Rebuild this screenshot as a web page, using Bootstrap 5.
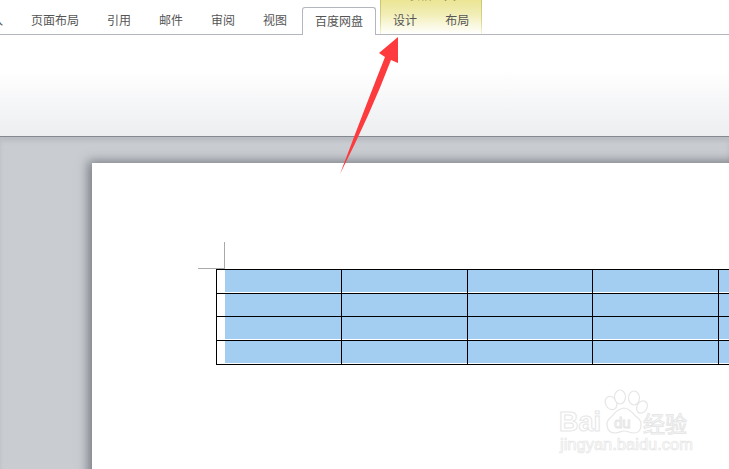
<!DOCTYPE html>
<html lang="zh-CN">
<head>
  <meta charset="UTF-8" />
  <meta name="viewport" content="width=device-width, initial-scale=1" />
  <title>Word 表格</title>
  <link href="https://cdn.jsdelivr.net/npm/bootstrap@5.3.3/dist/css/bootstrap.min.css" rel="stylesheet" />
  <style>
    html, body { height: 100%; overflow: hidden; }
    body {
      background: #fff;
      font-family: "Noto Sans CJK SC", "Liberation Sans", sans-serif;
      position: relative;
    }
    .tab-strip {
      height: 35px;
      border-bottom: 1px solid #b4b6bd;
      margin-left: -35px;
      background: #fff;
    }
    .rtab {
      padding: 6px 14px 0;
      font-size: 12px;
      line-height: 28px;
      height: 34px;
      color: #555;
      white-space: nowrap;
    }
    .rtab-on {
      background: #fff;
      height: 28px;
      margin-top: 7px;
      padding: 0 12px;
      margin-left: 1px;
      margin-right: 4px;
      line-height: 26px;
      border: 1px solid #b4b6bd;
      border-bottom: 0;
      border-radius: 3px 3px 0 0;
      position: relative;
      z-index: 1;
    }
    .ctx-group {
      position: relative;
      background: linear-gradient(#ebe594 0, #f1edb4 40%, #fbfae6 80%, #fff 100%);
      border-left: 1px solid;
      border-right: 1px solid;
      border-image: linear-gradient(#c9c46a 0, #d8d48e 60%, #f6f5e0 100%) 1;
      padding: 0 12px;
      gap: 28px;
      height: 34px;
    }
    .ctx-group .rtab { padding: 6px 0 0; }
    .ctx-title {
      position: absolute;
      top: -11px;
      left: 27px;
      font-size: 12px;
      line-height: 11px;
      color: #8f8d5c;
      filter: blur(.5px);
      white-space: nowrap;
    }
    .rbody {
      height: 102px;
      background: linear-gradient(#fff 0, #fff 35%, #f2f3f5 80%, #eceef0 100%);
      border-bottom: 1px solid #85898f;
    }
    .workspace {
      height: 332px;
      background: #c9cdd2;
      box-shadow: inset 0 4px 4px rgba(70, 74, 82, .12);
      padding: 26px 0 0 92px;
      overflow: hidden;
    }
    .doc-page {
      width: 800px;
      height: 400px;
      background: #fff;
      padding: 106px 0 0 124px;
      box-shadow: -4px -2px 10px rgba(70, 74, 82, .6);
    }
    .tbl-wrap { position: relative; width: 640px; }
    .crop-v {
      position: absolute;
      left: 8px;
      top: -27px;
      width: 1px;
      height: 27px;
      background: #a9a9a9;
    }
    .crop-h {
      position: absolute;
      left: -18px;
      top: -1px;
      width: 27px;
      height: 1px;
      background: #a9a9a9;
    }
    .doc-table { border-collapse: collapse; table-layout: fixed; width: 628px; }
    .doc-table td {
      border: 1px solid #000;
      padding: 0;
      height: 24px;
      vertical-align: top;
    }
    .doc-table col.cw-a { width: 125px; }
    .doc-table col.cw-b { width: 126px; }
    .doc-table tr.r2 td { height: 23px; }
    .sel {
      background: #a3cdf1;
      height: 22px;
    }
    .sel-first { margin-left: 8px; }
    .arrow-over {
      position: absolute;
      left: 0;
      top: 0;
      pointer-events: none;
    }
    .wmark {
      position: absolute;
      left: 556px;
      top: 388px;
      width: 140px;
      height: 68px;
      color: transparent;
      -webkit-text-stroke: 1px #e6e6e6;
      font-family: "Liberation Sans", sans-serif;
    }
    .wm-bai {
      position: absolute;
      left: 3px;
      top: 20px;
      font-size: 27px;
      line-height: 28px;
      font-weight: 700;
    }
    .wm-du {
      position: absolute;
      left: 58px;
      top: 27px;
      font-size: 15px;
      line-height: 16px;
    }
    .wm-cn {
      position: absolute;
      left: 87px;
      top: 21px;
      font-size: 22px;
      line-height: 26px;
      font-family: "Noto Sans CJK SC", sans-serif;
      white-space: nowrap;
    }
    .wm-url {
      position: absolute;
      left: 4px;
      top: 46px;
      font-size: 16.5px;
      line-height: 20px;
      white-space: nowrap;
      -webkit-text-stroke: .7px #e6e6e6;
    }
  </style>
</head>
<body>

  <div class="tab-strip d-flex align-items-start">
    <div class="rtab">插入</div>
    <div class="rtab">页面布局</div>
    <div class="rtab">引用</div>
    <div class="rtab">邮件</div>
    <div class="rtab">审阅</div>
    <div class="rtab">视图</div>
    <div class="rtab rtab-on">百度网盘</div>
    <div class="ctx-group d-flex">
      <div class="ctx-title">表格工具</div>
      <div class="rtab">设计</div>
      <div class="rtab">布局</div>
    </div>
  </div>
  <div class="rbody"></div>

  <div class="workspace">
    <div class="doc-page">
      <div class="tbl-wrap">
        <div class="crop-v"></div>
        <div class="crop-h"></div>
        <table class="doc-table">
          <colgroup>
            <col class="cw-a" /><col class="cw-b" /><col class="cw-a" /><col class="cw-b" /><col class="cw-b" />
          </colgroup>
          <tr>
            <td><div class="sel sel-first"></div></td>
            <td><div class="sel"></div></td>
            <td><div class="sel"></div></td>
            <td><div class="sel"></div></td>
            <td><div class="sel"></div></td>
          </tr>
          <tr class="r2">
            <td><div class="sel sel-first"></div></td>
            <td><div class="sel"></div></td>
            <td><div class="sel"></div></td>
            <td><div class="sel"></div></td>
            <td><div class="sel"></div></td>
          </tr>
          <tr>
            <td><div class="sel sel-first"></div></td>
            <td><div class="sel"></div></td>
            <td><div class="sel"></div></td>
            <td><div class="sel"></div></td>
            <td><div class="sel"></div></td>
          </tr>
          <tr>
            <td><div class="sel sel-first"></div></td>
            <td><div class="sel"></div></td>
            <td><div class="sel"></div></td>
            <td><div class="sel"></div></td>
            <td><div class="sel"></div></td>
          </tr>
        </table>
      </div>
    </div>
  </div>

  <!-- red annotation arrow -->
  <svg class="arrow-over" width="729" height="469" viewBox="0 0 729 469">
    <path d="M398 37 L379 53 L385 57 Q366 105 340 174 Q370 115 391 60 L398 63 Z" fill="#fd3a3d" />
  </svg>

  <!-- watermark -->
  <div class="wmark">
    <span class="wm-bai">Bai</span>
    <svg class="arrow-over" width="140" height="68" viewBox="0 0 140 68">
      <g fill="#fff" stroke="#e6e6e6" stroke-width="1.2">
        <ellipse cx="55" cy="15" rx="5.5" ry="7" transform="rotate(-30 55 15)" />
        <ellipse cx="64" cy="9" rx="5.5" ry="7" />
        <ellipse cx="78" cy="10" rx="5.5" ry="7" />
        <ellipse cx="86" cy="19" rx="5" ry="6.5" transform="rotate(30 86 19)" />
        <path d="M68 20 C60 21 58 27 54 30 C49 34 50 45 59 45 C63 45 65 43 68 43 C72 43 74 45 78 45 C86 45 87 34 82 30 C77 27 76 21 68 20 Z" />
      </g>
    </svg>
    <span class="wm-du">du</span>
    <span class="wm-cn">经验</span>
    <span class="wm-url">jingyan.baidu.com</span>
  </div>

  <script src="https://cdn.jsdelivr.net/npm/bootstrap@5.3.3/dist/js/bootstrap.bundle.min.js"></script>
</body>
</html>
